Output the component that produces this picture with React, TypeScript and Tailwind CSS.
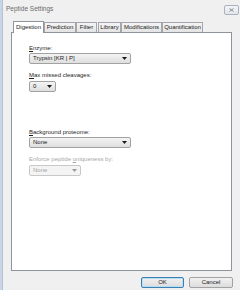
const Arrow = ({ disabled }: { disabled?: boolean }) => (
  <svg width="5" height="3" viewBox="0 0 5 3" className="shrink-0">
    <polygon points="0,0 5,0 2.5,3" fill={disabled ? "#9a9a9a" : "#1a1a1a"} />
  </svg>
)

const Combo = ({
  value,
  width,
  disabled,
}: {
  value: string
  width: string
  disabled?: boolean
}) => (
  <div
    className={`${width} h-[11px] flex items-center justify-between pl-[3px] pr-[3px] rounded-[2px] border ${
      disabled
        ? "border-[#c6c8cb] bg-[#f4f4f4] text-[#a3a3a3]"
        : "border-[#a2a2a2] bg-gradient-to-b from-[#f4f4f4] to-[#dedede] text-[#1b1b1b]"
    }`}
  >
    <span className="leading-[7px]">{value}</span>
    <Arrow disabled={disabled} />
  </div>
)

const Label = ({
  pre,
  u,
  post,
  disabled,
}: {
  pre?: string
  u: string
  post: string
  disabled?: boolean
}) => (
  <div
    className={`leading-[7px] h-[7px] ${
      disabled ? "text-[#a8a8a8]" : "text-[#1e1e1e]"
    }`}
  >
    {pre}
    <span className="underline underline-offset-[1px]">{u}</span>
    {post}
  </div>
)

const tabs = [
  { name: "Prediction", w: "w-[32px]", ml: "ml-0" },
  { name: "Filter", w: "w-[21px]", ml: "ml-0" },
  { name: "Library", w: "w-[23px]", ml: "ml-[1px]" },
  { name: "Modifications", w: "w-[41px]", ml: "ml-0" },
  { name: "Quantification", w: "w-[41px]", ml: "ml-0" },
]

export default function App() {
  return (
    <div className="w-[240px] h-[290px] bg-[#f0f0f0] flex overflow-hidden font-['Liberation_Sans',Arial,sans-serif] text-[6px]">
      <div className="w-[3px] shrink-0 bg-[#c8d5e5] border-r border-[#b4c2d3]" />
      <div className="flex-1 flex flex-col">
        {/* title bar */}
        <div className="h-[17px] flex items-start justify-between">
          <span className="mt-[5px] ml-[3px] text-[6.5px] leading-[8px] text-[#6a6a6a]">
            Peptide Settings
          </span>
          <div className="mt-[5px] mr-[1px] w-[15px] h-[10px] rounded-[2px] border border-[#a9b3bf] bg-gradient-to-b from-[#f3f5f8] to-[#e2e6eb] flex items-center justify-center">
            <svg width="5" height="4" viewBox="0 0 5 4">
              <path d="M0.5 0.5 L4.5 3.5 M4.5 0.5 L0.5 3.5" stroke="#8c8c8c" strokeWidth="1" />
            </svg>
          </div>
        </div>

        {/* tabs */}
        <div className="mt-[4px] ml-[10px] h-[11px] flex items-end">
          <div className="relative z-10 -mb-px w-[31px] h-[12px] bg-white border border-b-0 border-[#8f939b] flex items-center justify-center text-[#1b1b1b] leading-[7px]">
            Digestion
          </div>
          {tabs.map((t) => (
            <div
              key={t.name}
              className={`${t.w} ${t.ml} h-[10px] border border-b-0 border-[#a3a6ab] bg-gradient-to-b from-[#f4f4f4] to-[#e4e4e4] flex items-center justify-center text-[#1b1b1b] leading-[7px] whitespace-nowrap`}
            >
              {t.name}
            </div>
          ))}
        </div>

        {/* panel */}
        <div className="ml-[8px] w-[221px] h-[239px] bg-white border border-[#8f939b] flex flex-col pl-[17px] pt-[12px]">
          <Label u="E" post="nzyme:" />
          <div className="mt-[1px]">
            <Combo value="Trypsin [KR | P]" width="w-[102px]" />
          </div>
          <div className="mt-[8px]">
            <Label u="M" post="ax missed cleavages:" />
          </div>
          <div className="mt-[2px]">
            <Combo value="0" width="w-[27px]" />
          </div>
          <div className="mt-[37px]">
            <Label u="B" post="ackground proteome:" />
          </div>
          <div className="mt-[1px]">
            <Combo value="None" width="w-[102px]" />
          </div>
          <div className="mt-[8px]">
            <Label pre="Enforce peptide " u="u" post="niqueness by:" disabled />
          </div>
          <div className="mt-[2px]">
            <Combo value="None" width="w-[52px]" disabled />
          </div>
        </div>

        {/* buttons */}
        <div className="mt-[6px] flex justify-end gap-[5px] pr-[7px]">
          <button className="w-[43px] h-[11px] rounded-[2px] border border-[#3c7fb1] shadow-[inset_0_0_0_1px_#b7def7] bg-gradient-to-b from-[#f2f2f2] to-[#dcdcdc] text-[#1b1b1b] leading-[7px] flex items-center justify-center">
            OK
          </button>
          <button className="w-[44px] h-[11px] rounded-[2px] border border-[#a2a2a2] bg-gradient-to-b from-[#f2f2f2] to-[#dcdcdc] text-[#1b1b1b] leading-[7px] flex items-center justify-center">
            Cancel
          </button>
        </div>
      </div>
    </div>
  )
}
